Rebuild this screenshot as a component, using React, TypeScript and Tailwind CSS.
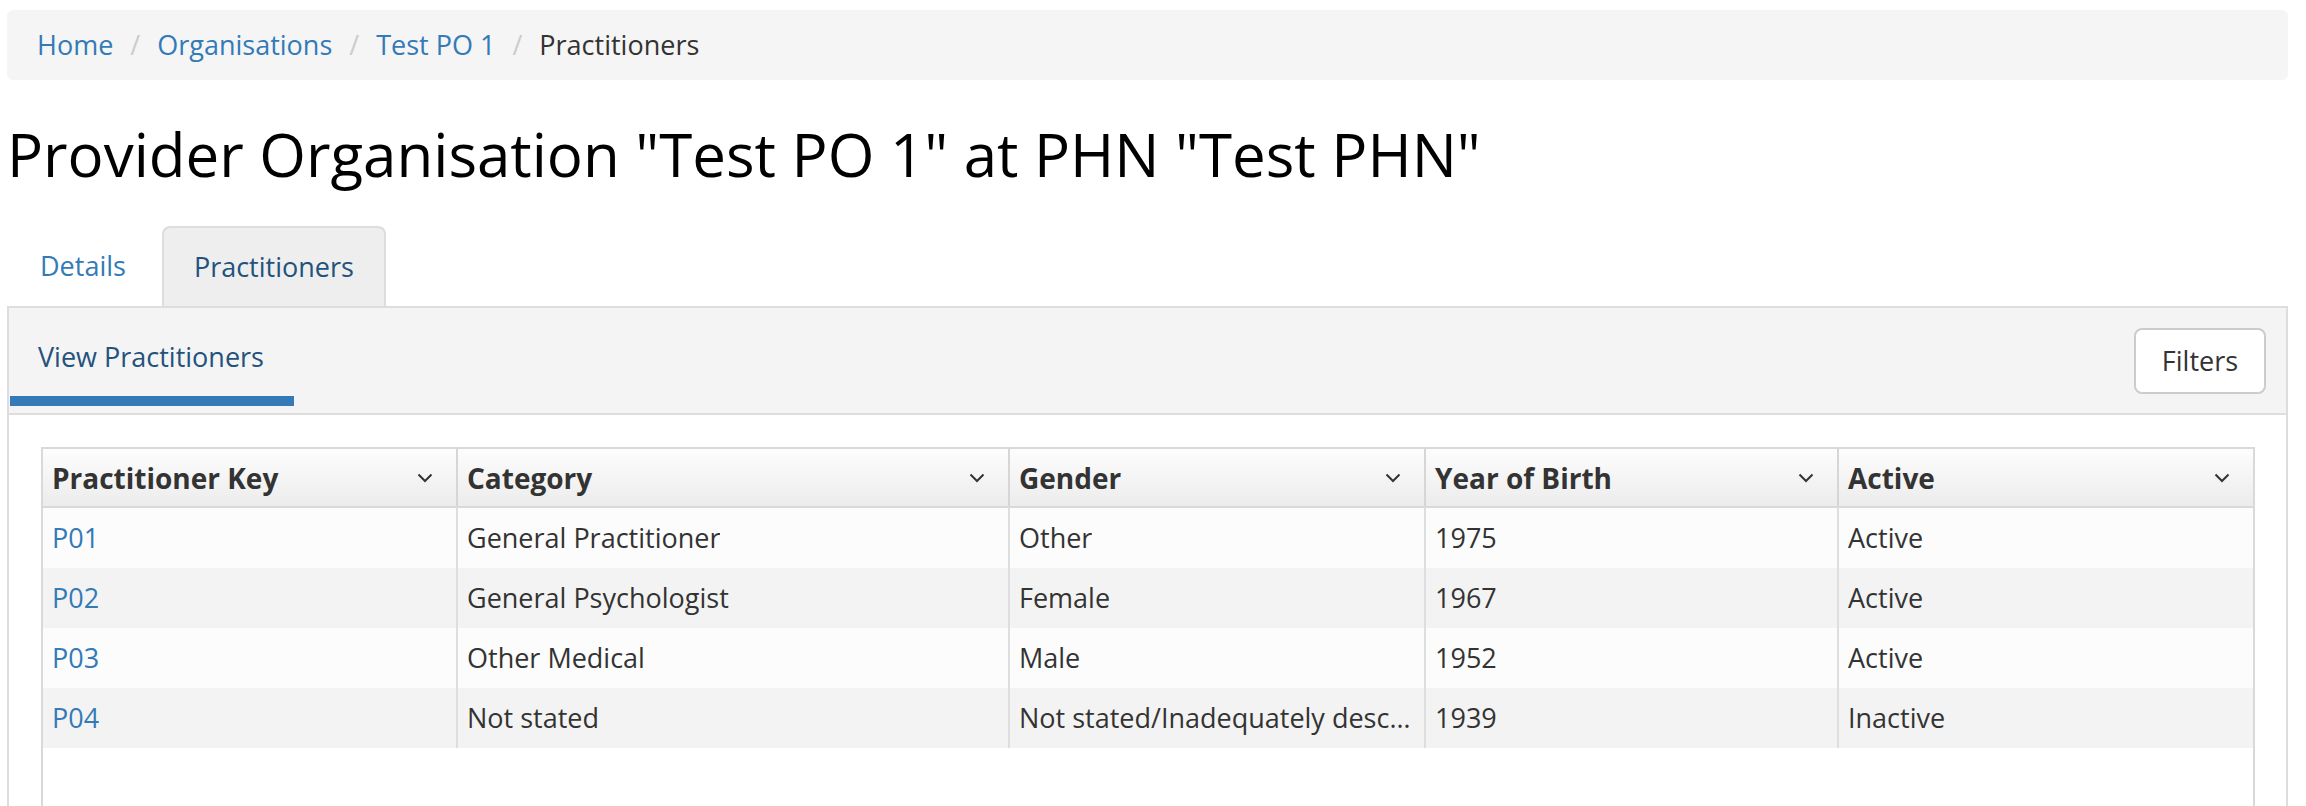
const columns = ["Practitioner Key", "Category", "Gender", "Year of Birth", "Active"];

const rows = [
    { key: "P01", category: "General Practitioner", gender: "Other", yob: "1975", active: "Active" },
    { key: "P02", category: "General Psychologist", gender: "Female", yob: "1967", active: "Active" },
    { key: "P03", category: "Other Medical", gender: "Male", yob: "1952", active: "Active" },
    { key: "P04", category: "Not stated", gender: "Not stated/Inadequately described", yob: "1939", active: "Inactive" },
];

function Chevron() {
    return (
        <svg width="16" height="10" viewBox="0 0 16 10" className="shrink-0">
            <polyline points="1.5,1.5 8,8 14.5,1.5" fill="none" stroke="#333" strokeWidth="2" />
        </svg>
    );
}

function Breadcrumb() {
    const links = ["Home", "Organisations", "Test PO 1"];
    return (
        <nav className="mt-[10px] flex h-[70px] items-center rounded-[6px] bg-[#f5f5f5] px-[30px]">
            {links.map((label) => (
                <span key={label} className="flex items-center">
                    <span className="text-[#337ab7]">{label}</span>
                    <span className="mx-[17px] text-[#ccc]">/</span>
                </span>
            ))}
            <span className="text-[#333]">Practitioners</span>
        </nav>
    );
}

export default function App() {
    return (
        <div className="h-[806px] w-[2306px] overflow-hidden bg-white pl-[7px] pr-[18px] font-['Open_Sans',sans-serif] text-[27px] leading-[40px] text-[#333]">
            <Breadcrumb />

            <h1 className="mt-[42px] text-[60px] font-normal leading-[65px] text-black">
                Provider Organisation "Test PO 1" at PHN "Test PHN"
            </h1>

            {/* top tabs */}
            <div className="mt-[39px] flex h-[80px] items-stretch pl-[3px]">
                <div className="mr-[6px] flex items-center px-[30px] text-[#337ab7]">Details</div>
                <div className="flex items-center rounded-t-[8px] border-2 border-b-0 border-[#ddd] bg-[#eee] px-[30px] text-[#23527c]">
                    Practitioners
                </div>
            </div>

            <div className="h-[600px] border-2 border-[#ddd] bg-white">
                {/* panel header */}
                <div className="flex h-[107px] items-start justify-between border-b-2 border-[#ddd] bg-[#f4f4f4]">
                    <div className="ml-[1px] flex w-[284px] flex-col">
                        <div className="pl-[28px] pt-[29px] text-[#23527c]">View Practitioners</div>
                        <div className="mt-[19px] h-[10px] bg-[#337ab7]" />
                    </div>
                    <button className="mr-[20px] mt-[20px] flex h-[66px] w-[132px] items-center justify-center rounded-[8px] border-2 border-[#ccc] bg-white text-[#333]">
                        Filters
                    </button>
                </div>

                {/* grid */}
                <div className="pl-[32px] pr-[31px] pt-[32px]">
                    <div className="h-[500px] border-2 border-[#d9d9d9]">
                        <div className="grid grid-cols-[415px_552px_416px_413px_414px] border-b-2 border-[#d9d9d9]">
                            {columns.map((col, i) => (
                                <div
                                    key={col}
                                    className={`flex h-[57px] items-center justify-between bg-linear-to-b from-[#fdfdfd] to-[#ececec] pl-[9px] pr-[23px] text-[28px] font-bold text-[#333] ${
                                        i < columns.length - 1 ? "border-r-2 border-[#d6d6d6]" : ""
                                    }`}
                                >
                                    <span>{col}</span>
                                    <Chevron />
                                </div>
                            ))}
                        </div>
                        {rows.map((row, idx) => {
                            const cells = [row.key, row.category, row.gender, row.yob, row.active];
                            return (
                                <div
                                    key={row.key}
                                    className={`grid h-[60px] grid-cols-[415px_552px_416px_413px_414px] ${
                                        idx % 2 === 0 ? "bg-[#fcfcfc]" : "bg-[#f3f3f3]"
                                    }`}
                                >
                                    {cells.map((cell, i) => (
                                        <div
                                            key={`${row.key}-${i}`}
                                            className={`flex min-w-0 items-center pl-[9px] pr-[12px] ${
                                                i < cells.length - 1 ? "border-r-2 border-[#dedede]" : ""
                                            } ${i === 0 ? "text-[#337ab7]" : "text-[#333]"}`}
                                        >
                                            <span className="truncate">{cell}</span>
                                        </div>
                                    ))}
                                </div>
                            );
                        })}
                    </div>
                </div>
            </div>
        </div>
    );
}
